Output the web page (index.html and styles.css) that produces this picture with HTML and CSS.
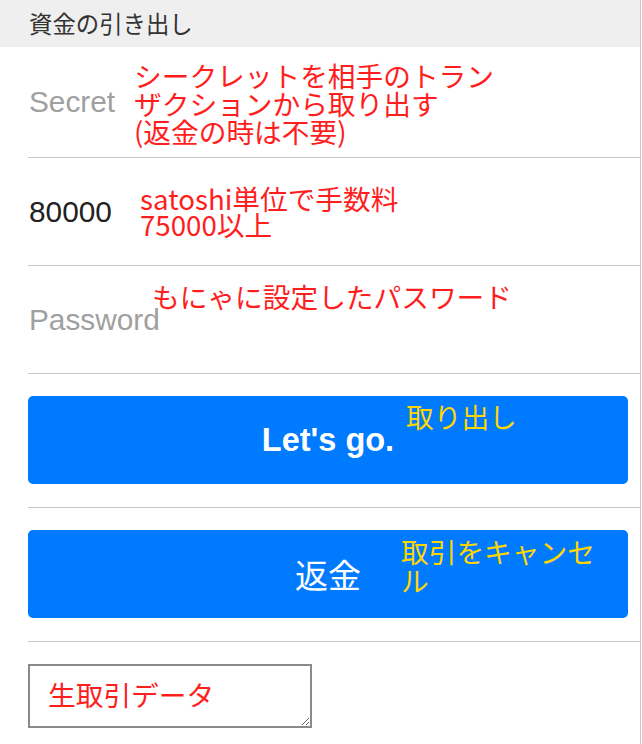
FILE: index.html
```html
<!DOCTYPE html>
<html lang="ja">
<head>
<meta charset="utf-8">
<title>資金の引き出し</title>
<link rel="stylesheet" href="styles.css">
</head>
<body>
<div class="page">
  <div class="header">資金の引き出し</div>
  <div class="list">
    <div class="row row-secret">
      <input class="field" type="text" placeholder="Secret">
      <div class="note note-secret">シークレットを相手のトラン<br>ザクションから取り出す<br>(返金の時は不要)</div>
    </div>
    <div class="row row-fee">
      <input class="field" type="text" value="80000">
      <div class="note note-fee">satoshi単位で手数料<br>75000以上</div>
    </div>
    <div class="row row-pass">
      <input class="field" type="password" placeholder="Password">
      <div class="note note-pass">もにゃに設定したパスワード</div>
    </div>
    <div class="row row-btn">
      <button class="btn btn-go">Let's go.</button>
      <div class="note note-yellow note-go">取り出し</div>
    </div>
    <div class="row row-btn">
      <button class="btn btn-refund">返金</button>
      <div class="note note-yellow note-refund">取引をキャンセ<br>ル</div>
    </div>
    <div class="row row-raw">
      <textarea class="raw" placeholder="生取引データ"></textarea>
    </div>
  </div>
</div>
</body>
</html>
```

FILE: styles.css
```css
html, body {
  margin: 0;
  padding: 0;
  background: #fff;
}

body {
  font-family: "Liberation Sans", Arial, "Noto Sans CJK JP", sans-serif;
}

.page {
  width: 641px;
  min-height: 744px;
  box-sizing: border-box;
  border-right: 1px solid #c8c8c8;
}

.header {
  height: 47px;
  background: #efefef;
  padding-left: 29px;
  display: flex;
  align-items: center;
  font-family: "Noto Sans CJK JP", sans-serif;
  font-size: 23.4px;
  color: #333;
  box-sizing: border-box;
  padding-bottom: 1px;
}

.list {
  margin-left: 28px;
}

.row {
  position: relative;
  border-bottom: 1px solid #c8c8c8;
  display: flex;
  align-items: center;
  box-sizing: content-box;
}

.row-secret { height: 110px; }
.row-fee { height: 107px; }
.row-pass { height: 107px; }

.row-btn {
  height: 88px;
  padding: 22px 0 23px;
}

.row-raw {
  border-bottom: none;
  padding-top: 22px;
  align-items: flex-start;
}

.field {
  border: none;
  outline: none;
  padding: 0 0 0 1px;
  margin: 0;
  background: transparent;
  font-family: "Liberation Sans", Arial, sans-serif;
  font-size: 29.8px;
  color: #222;
  width: 320px;
}

.field::placeholder {
  color: #a0a0a0;
}

.note {
  position: absolute;
  font-family: "Noto Sans CJK JP", sans-serif;
  font-size: 27.7px;
  color: #ff1e1e;
  white-space: nowrap;
}

.note-secret {
  left: 106px;
  top: 14px;
  line-height: 28px;
}

.note-fee {
  left: 112px;
  top: 27px;
  line-height: 26px;
}

.note-pass {
  left: 124px;
  top: 16px;
  line-height: 28px;
}

.note-yellow {
  color: #ffd600;
}

.note-go {
  left: 378px;
  top: 28px;
  line-height: 28px;
}

.note-refund {
  left: 373px;
  top: 29px;
  line-height: 29px;
}

.btn {
  width: 600px;
  height: 88px;
  border: none;
  border-radius: 5px;
  background: #007aff;
  color: #fff;
  margin: 0;
  padding: 0;
  cursor: pointer;
}

.btn-go {
  font-family: "Liberation Sans", Arial, sans-serif;
  font-weight: bold;
  font-size: 32.5px;
}

.btn-refund {
  font-family: "Noto Sans CJK JP", sans-serif;
  font-size: 33px;
}

.raw {
  width: 284px;
  height: 64px;
  box-sizing: border-box;
  border: 2px solid #8a8a8a;
  border-radius: 0;
  margin: 0;
  padding: 12px 18px 0;
  font-family: "Noto Sans CJK JP", sans-serif;
  font-size: 27.7px;
  line-height: 32px;
  color: #222;
  outline: none;
}

.raw::placeholder {
  color: #ff1e1e;
}
```
